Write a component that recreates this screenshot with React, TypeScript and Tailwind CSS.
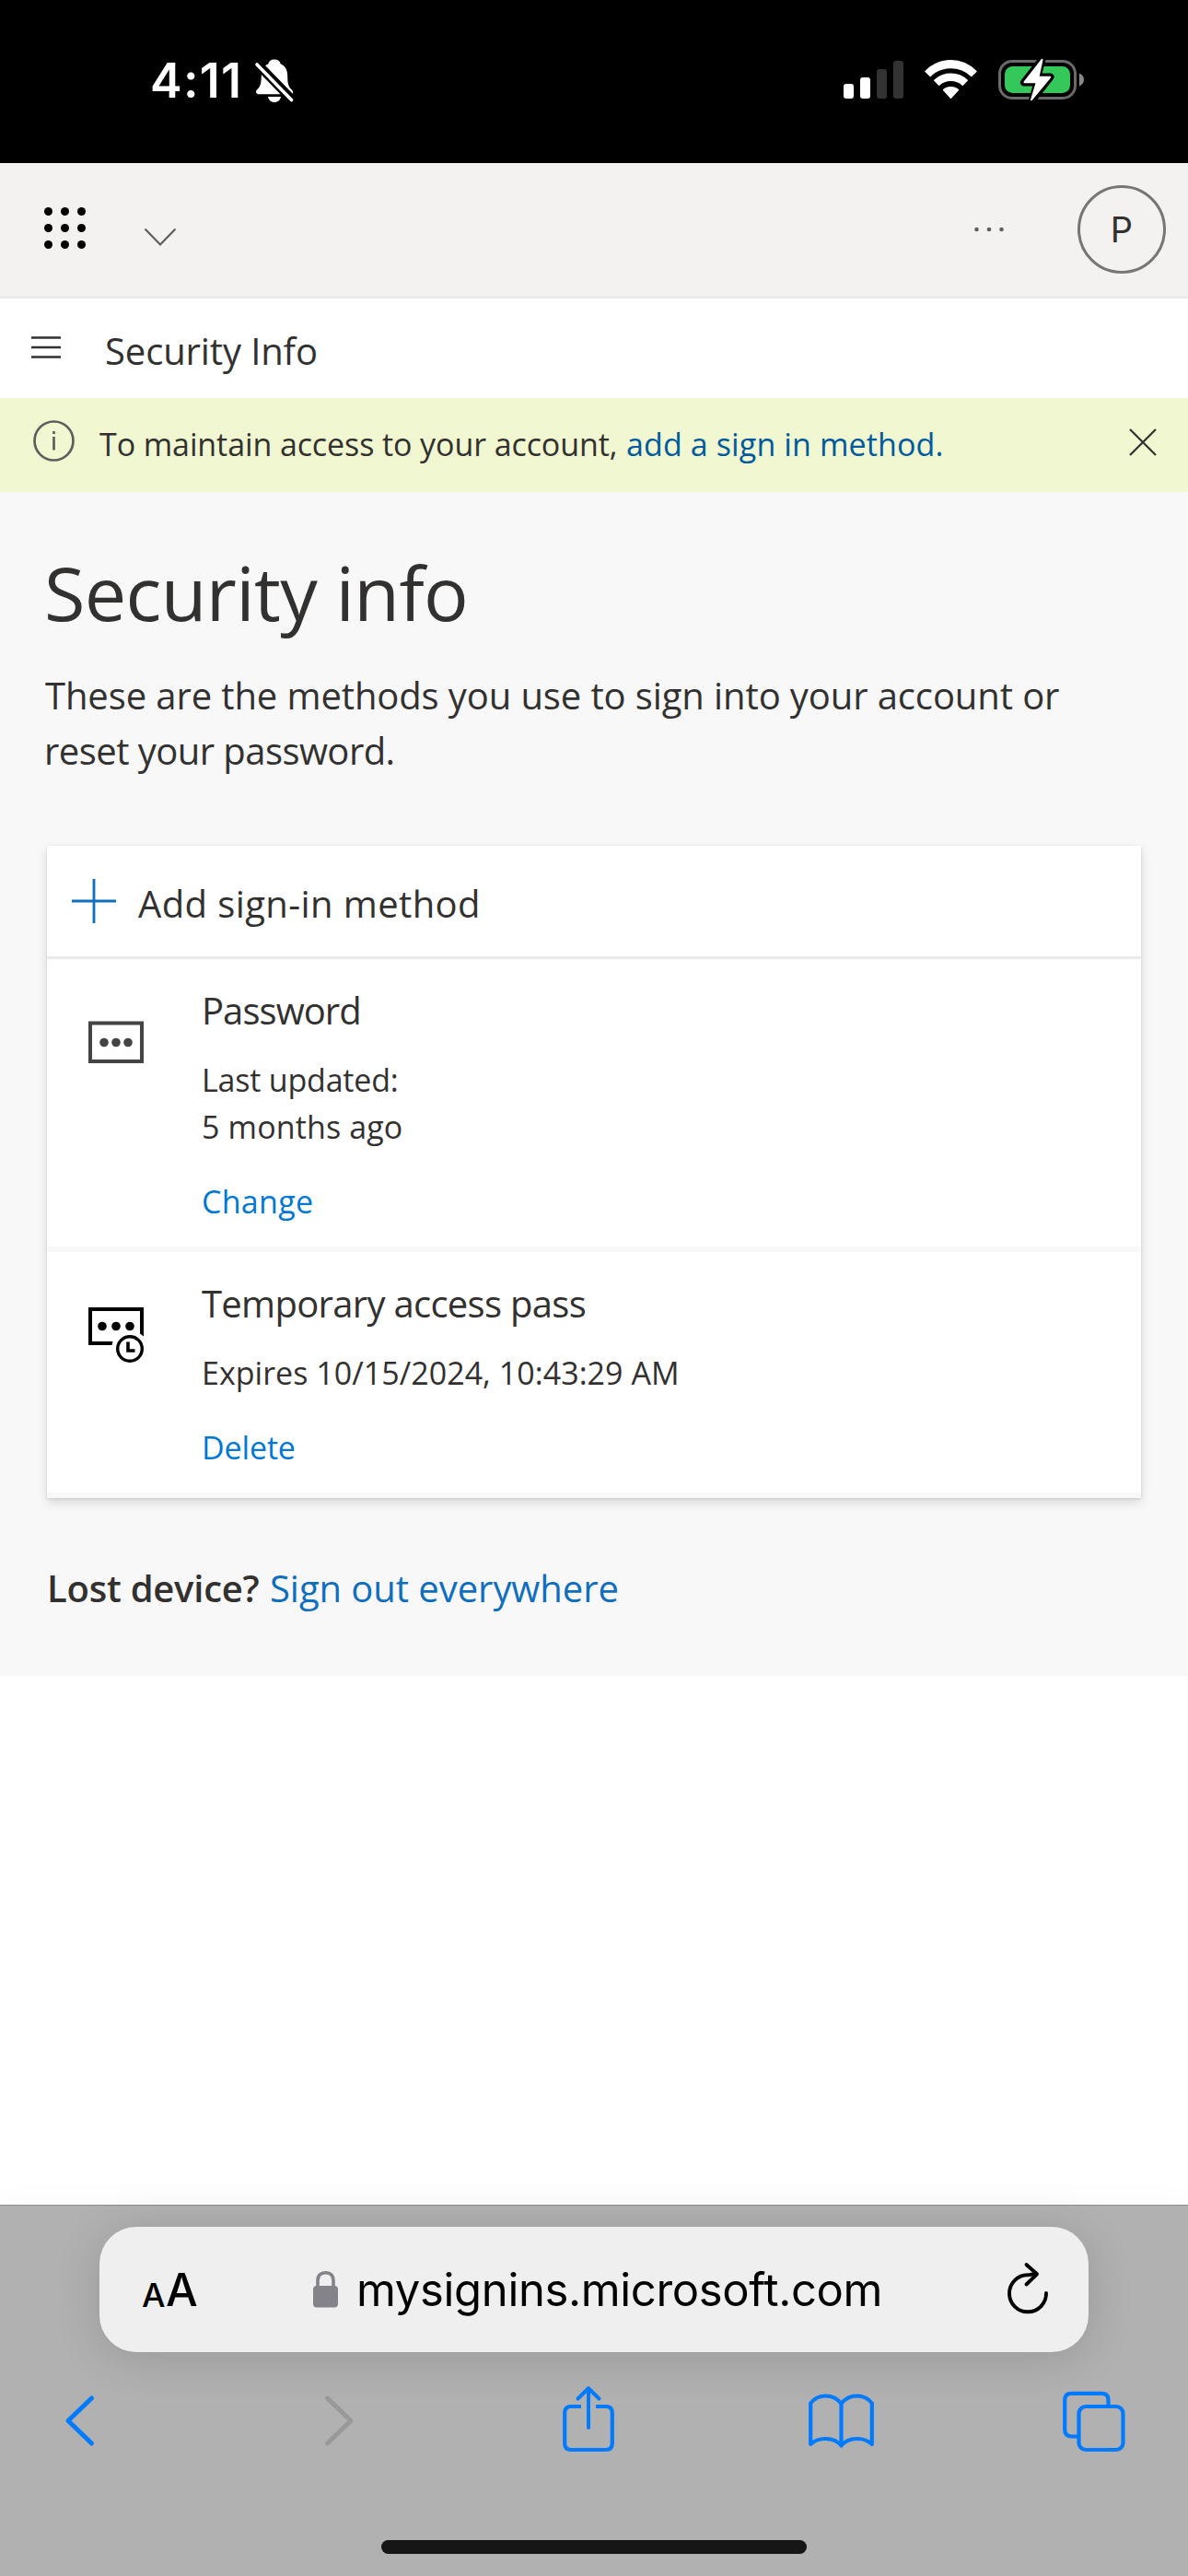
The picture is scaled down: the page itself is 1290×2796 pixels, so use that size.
import type { ReactNode } from "react";

function StatusBar() {
  return (
    <div className="flex h-[177px] shrink-0 items-start bg-black pl-[163px] text-white">
      <span className="mt-[57px] w-[99px] whitespace-nowrap font-['Inter',sans-serif] text-[52px] font-semibold leading-[62px] tracking-[1.27px]">4:11</span>
      <svg className="mt-[64px] ml-[14px]" width="44" height="48" viewBox="0 0 44 48">
        <path d="M22 1c3.600 0 6 1.800 6.800 5 5 2 7.400 6.500 7.400 13 0 9 1.300 12 4.700 15 2 2 1.600 4.800-1 4.800H5c-2.600 0-4-2.800-2-4.800 3.500-3.500 4.800-6.500 4.800-15C7.800 12.500 10.200 8 15.200 6 16 2.800 18.400 1 22 1z" fill="#fff" transform="translate(0 -.5)" />
        <path d="M15 41h14c-.6 3.800-3.600 6-7 6s-6.400-2.200-7-6z" fill="#fff" />
        <path d="M3.500 5.500 41 44" stroke="#000" strokeWidth="10" />
        <path d="M3 6 40.500 44.500" stroke="#fff" strokeWidth="3.600" strokeLinecap="round" />
      </svg>
      <svg className="mt-[66px] ml-[596px]" width="65" height="41" viewBox="0 0 65 41">
        <rect x="0" y="25" width="11" height="16" rx="3" fill="#fff" />
        <rect x="18" y="18" width="11" height="23" rx="3" fill="#fff" />
        <rect x="36" y="9" width="11" height="32" rx="3" fill="#333" />
        <rect x="54" y="0" width="11" height="41" rx="3" fill="#333" />
      </svg>
      <svg className="mt-[65px] ml-[23px]" width="57" height="43" viewBox="0 0 57 43">
        <g fill="#fff" stroke="#fff" strokeWidth="1.400" strokeLinejoin="round">
          <path d="M1 12.600C8.500 5 18 .8 28.500 .8S48.500 5 56 12.600L50.800 17.500C44.800 11.600 37 8.500 28.500 8.500S12.200 11.600 6.200 17.500z" />
          <path d="M10.800 22.300C15.500 17.600 21.700 15.200 28.500 15.200S41.500 17.600 46.200 22.300L41.300 27.200C37.800 24 33.400 22.400 28.500 22.400S19.200 24 15.700 27.200z" />
          <path d="M20.500 32.600C22.600 30.600 25.400 29.600 28.500 29.600S34.400 30.600 36.500 32.600L28.500 41.200z" />
        </g>
      </svg>
      <svg className="mt-[63px] ml-[23px]" width="94" height="48" viewBox="0 0 94 48">
        <rect x="1.500" y="3.500" width="82" height="40" rx="13.500" fill="none" stroke="#6b6969" strokeWidth="3" />
        <path d="M88 16.500c3 1.200 5 3.800 5 7s-2 5.800-5 7z" fill="#8a8888" />
        <rect x="7" y="9" width="71" height="29" rx="8.500" fill="#34c759" />
        <path d="M47.500 1.500 28 26.500h14.500L37 45.500 56.500 20.500H42.500z" fill="#000" stroke="#000" strokeWidth="8" strokeLinejoin="round" />
        <path d="M47.500 1.800 28.500 26.200h13.300L36 45.200 56.200 20.800H43.500z" fill="#fff" stroke="#fff" strokeWidth="2" strokeLinejoin="round" />
      </svg>
    </div>
  );
}

function AppHeader() {
  const grid = [0, 1, 2];
  return (
    <header className="flex h-[147px] shrink-0 items-start border-b-[3px] border-[#eaeaea] bg-[#f3f2f1] pl-[48px]">
      <svg className="mt-[48px]" width="45" height="45" viewBox="0 0 45 45">
        {grid.map((r) => grid.map((c) => <circle key={`${r}-${c}`} cx={4.5 + c * 18} cy={4.5 + r * 18} r="4.500" />))}
      </svg>
      <svg className="mt-[69px] ml-[63px]" width="36" height="23" viewBox="0 0 36 23">
        <path d="M1.500 2.500 18 19.500 34.500 2.500" fill="none" stroke="#605e5c" strokeWidth="2.200" />
      </svg>
      <svg className="mt-[69px] ml-[865px]" width="34" height="6" viewBox="0 0 34 6" fill="#605e5c">
        <circle cx="3.500" cy="3" r="2.300" /><circle cx="17" cy="3" r="2.300" /><circle cx="30.500" cy="3" r="2.300" />
      </svg>
      <div className="mt-[24px] ml-[79px] flex size-[96px] items-center justify-center rounded-full border-[3px] border-[#767676] font-['Inter',sans-serif] text-[38px] leading-none text-[#323130]">P</div>
    </header>
  );
}

function SubHeader() {
  return (
    <div className="flex h-[108px] shrink-0 items-start bg-white pl-[34px]">
      <svg className="mt-[40px]" width="32" height="26" viewBox="0 0 32 26">
        <path d="M0 2.500h32M0 13h32M0 23.500h32" stroke="#323130" strokeWidth="2.300" />
      </svg>
      <span className="mt-[30px] ml-[48px] text-[40px] leading-[53px] tracking-[-0.120px]">Security Info</span>
    </div>
  );
}

function Banner() {
  return (
    <div className="flex h-[102px] shrink-0 items-start bg-[#f1f7d0] pl-[36px] text-[34px] leading-[46px]">
      <svg className="mt-[24px]" width="46" height="46" viewBox="0 0 46 46">
        <circle cx="22.500" cy="22.500" r="21" fill="none" stroke="#605e5c" strokeWidth="2.700" />
        <path d="M22.500 18v14.500M22.500 12v3" stroke="#605e5c" strokeWidth="2.700" />
      </svg>
      <p className="mt-[27px] ml-[26px] w-[572px] whitespace-nowrap tracking-[-0.100px]">To maintain access to your account,</p>
      <a className="mt-[27px] w-[545px] whitespace-nowrap tracking-[0.120px] text-[#005a9e]">add a sign in method.</a>
      <svg className="mt-[32px]" width="32" height="32" viewBox="0 0 32 32">
        <path d="M2 2 30 30M30 2 2 30" stroke="#323130" strokeWidth="2.200" />
      </svg>
    </div>
  );
}

function MethodRow({ icon, title, action, children }: { icon: ReactNode; title: ReactNode; action: ReactNode; children: ReactNode }) {
  return (
    <div className="flex border-b-[6px] border-[#f8f8f8] pl-[45px]">
      {icon}
      <div className="ml-[63px] flex flex-col whitespace-nowrap pt-[28px] pb-[23px] text-[34px] leading-[51px]">
        <h2 className="text-[40px] leading-[56px]">{title}</h2>
        <div className="mt-[22px]">{children}</div>
        <a className="mt-[30px] text-[#0078d4]">{action}</a>
      </div>
    </div>
  );
}

const passwordIcon = (
  <svg className="mt-[67px]" width="60" height="47" viewBox="0 0 60 47">
    <rect x="2" y="2.500" width="56" height="41.500" fill="none" stroke="#444" strokeWidth="4" />
    <g fill="#444"><circle cx="17" cy="23.500" r="4.800" /><circle cx="30" cy="23.500" r="4.800" /><circle cx="43" cy="23.500" r="4.800" /></g>
  </svg>
);

const passIcon = (
  <svg className="mt-[60px]" width="60" height="60" viewBox="0 0 60 60">
    <path d="M0 0H60V31.500L56 28.500V4H4V37H26.500L25.500 41H0z" />
    <circle cx="15" cy="20.500" r="4.800" /><circle cx="30" cy="20.500" r="4.800" /><circle cx="45" cy="20.500" r="4.800" />
    <circle cx="45" cy="45" r="13.300" fill="#fff" stroke="#000" strokeWidth="3.400" />
    <path d="M43 37.500V47H50.500" fill="none" stroke="#000" strokeWidth="3.600" />
  </svg>
);

function Content() {
  return (
    <main className="h-[1285px] shrink-0 bg-[#f8f8f8] pl-[49px]">
      <h1 className="-ml-px pt-[54px] text-[81px] leading-[110px] tracking-[-0.650px]">Security info</h1>
      <p className="mt-[27px] whitespace-nowrap text-[40px] leading-[60px] tracking-[-0.110px]">
        These are the methods you use to sign into your account or<br />
        <span className="-ml-px tracking-[-0.550px]">reset your password.</span>
      </p>
      <section className="mt-[73px] ml-[2px] w-[1188px] bg-white shadow-[0_5px_11px_0_rgba(0,0,0,0.13),0_1px_3px_0_rgba(0,0,0,0.11)]">
        <div className="flex h-[123px] items-start border-b-[3px] border-[#eaeaea] pl-[27px]">
          <svg className="mt-[35px]" width="48" height="50" viewBox="0 0 48 50">
            <path d="M0 25h48M24 1v48" stroke="#106ebe" strokeWidth="2.800" />
          </svg>
          <span className="mt-[35px] ml-[24px] text-[40px] leading-[55px] tracking-[0.400px]">Add sign-in method</span>
        </div>
        <MethodRow icon={passwordIcon} title={<span className="tracking-[-0.940px]">Password</span>} action={<span className="tracking-[0.300px]">Change</span>}>
          <span className="tracking-[-0.200px]">Last updated:</span><br />
          <span className="tracking-[0.130px]">5 months ago</span>
        </MethodRow>
        <MethodRow icon={passIcon} title={<span className="tracking-[-0.700px]">Temporary access pass</span>} action={<span className="tracking-[-0.140px]">Delete</span>}>
          <span className="tracking-[0.030px]">Expires 10/15/2024, 10:43:29 AM</span>
        </MethodRow>
      </section>
      <p className="mt-[70px] flex whitespace-nowrap text-[40px] leading-[56px]">
        <strong className="w-[244px] pl-[2px] font-semibold tracking-[-0.240px]">Lost device?</strong>
        <a className="tracking-[-0.060px] text-[#106ebe]">Sign out everywhere</a>
      </p>
    </main>
  );
}

function BrowserBar() {
  return (
    <footer className="flex h-[403px] shrink-0 flex-col border-t border-[#8c8c8c] bg-[#b1b1b1] shadow-[0_0_36px_rgba(0,0,0,0.030)]">
      <div className="mt-[23px] ml-[108px] flex h-[136px] w-[1074px] shrink-0 items-start rounded-[40px] bg-[#efefef] pl-[46px] font-['Inter',sans-serif] text-black shadow-[0_6px_50px_rgba(0,0,0,0.140)]">
        <span className="mt-[43px] w-[26px] text-[36px] font-medium leading-[62px]">A</span>
        <span className="mt-[38px] w-[34px] text-[49px] font-medium leading-[62px]">A</span>
        <svg className="mt-[47px] ml-[126px]" width="27" height="41" viewBox="0 0 27 41">
          <rect x="0" y="17" width="27" height="23.500" rx="4" fill="#848389" />
          <path d="M5 18V11.500C5 5.500 8.500 2.800 13.500 2.800S22 5.500 22 11.500V18" fill="none" stroke="#848389" strokeWidth="3.600" />
        </svg>
        <span className="mt-[38px] ml-[20px] w-[600px] whitespace-nowrap text-[49px] leading-[62px] tracking-[-0.350px]">mysignins.microsoft.com</span>
        <svg className="mt-[38px] ml-[106px]" width="46" height="57" viewBox="0 0 46 57">
          <path d="M43 34A20 20 0 1 1 23 14.300Q27 13.600 31 13.300" fill="none" stroke="#000" strokeWidth="3.900" strokeLinecap="round" />
          <path d="M21.500 3 33 13.300 21.500 24.500" fill="none" stroke="#000" strokeWidth="3.900" strokeLinecap="round" strokeLinejoin="round" />
        </svg>
      </div>
      <nav className="flex h-[204px] shrink-0 items-start text-[#007aff]">
        <svg className="mt-[46px] ml-[70px]" width="34" height="57" viewBox="0 0 34 57" fill="none" stroke="currentColor" strokeWidth="5" strokeLinecap="round" strokeLinejoin="round">
          <path d="M29.500 4 4 28.500 29.500 53" />
        </svg>
        <svg className="mt-[46px] ml-[247px] text-[#999]" width="34" height="57" viewBox="0 0 34 57" fill="none" stroke="currentColor" strokeWidth="5" strokeLinecap="round" strokeLinejoin="round">
          <path d="M4.500 4 30 28.500 4.500 53" />
        </svg>
        <svg className="mt-[36px] ml-[225px]" width="58" height="74" viewBox="0 0 58 74" fill="none" stroke="currentColor" strokeWidth="4.200">
          <path d="M21 23H10Q3.200 23 3.200 30V63Q3.200 70 10 70H48Q54.800 70 54.800 63V30Q54.800 23 48 23H37" />
          <path d="M29 46V3.500M17.500 14.500 29 3.200 40.500 14.500" strokeWidth="4" strokeLinecap="round" strokeLinejoin="round" />
        </svg>
        <svg className="mt-[44px] ml-[209px]" width="73" height="61" viewBox="0 0 73 61" fill="none" stroke="currentColor" strokeWidth="4.200" strokeLinejoin="round" strokeLinecap="round">
          <path d="M36.500 12C32 6 26 3.500 19.500 3.500S7 6.500 3.200 11.500V56C8 51.500 13 50 19.500 50S32 52 36.500 57.500C41 52 47 50 53.500 50S65 51.500 69.800 56V11.500C66 6.500 60 3.500 53.500 3.500S41 6 36.500 12zV57" />
        </svg>
        <svg className="mt-[41px] ml-[203px]" width="70" height="68" viewBox="0 0 70 68" fill="none" stroke="currentColor" strokeWidth="4.200">
          <path d="M18 50.500H10.500Q3.200 50.500 3.200 43V11Q3.200 3.800 10.500 3.800H43Q50.500 3.800 50.500 11V18" />
          <rect x="18.500" y="18" width="48" height="47" rx="7.500" />
        </svg>
      </nav>
      <div className="mx-auto h-[15px] w-[462px] shrink-0 rounded-full bg-[#161616]" />
    </footer>
  );
}

export default function App() {
  return (
    <div className="flex h-[2796px] w-[1290px] flex-col overflow-hidden bg-white font-['Open_Sans','Noto_Sans',sans-serif] text-[#323130]">
      <StatusBar />
      <AppHeader />
      <SubHeader />
      <Banner />
      <Content />
      <div className="flex-1 bg-white" />
      <BrowserBar />
    </div>
  );
}
